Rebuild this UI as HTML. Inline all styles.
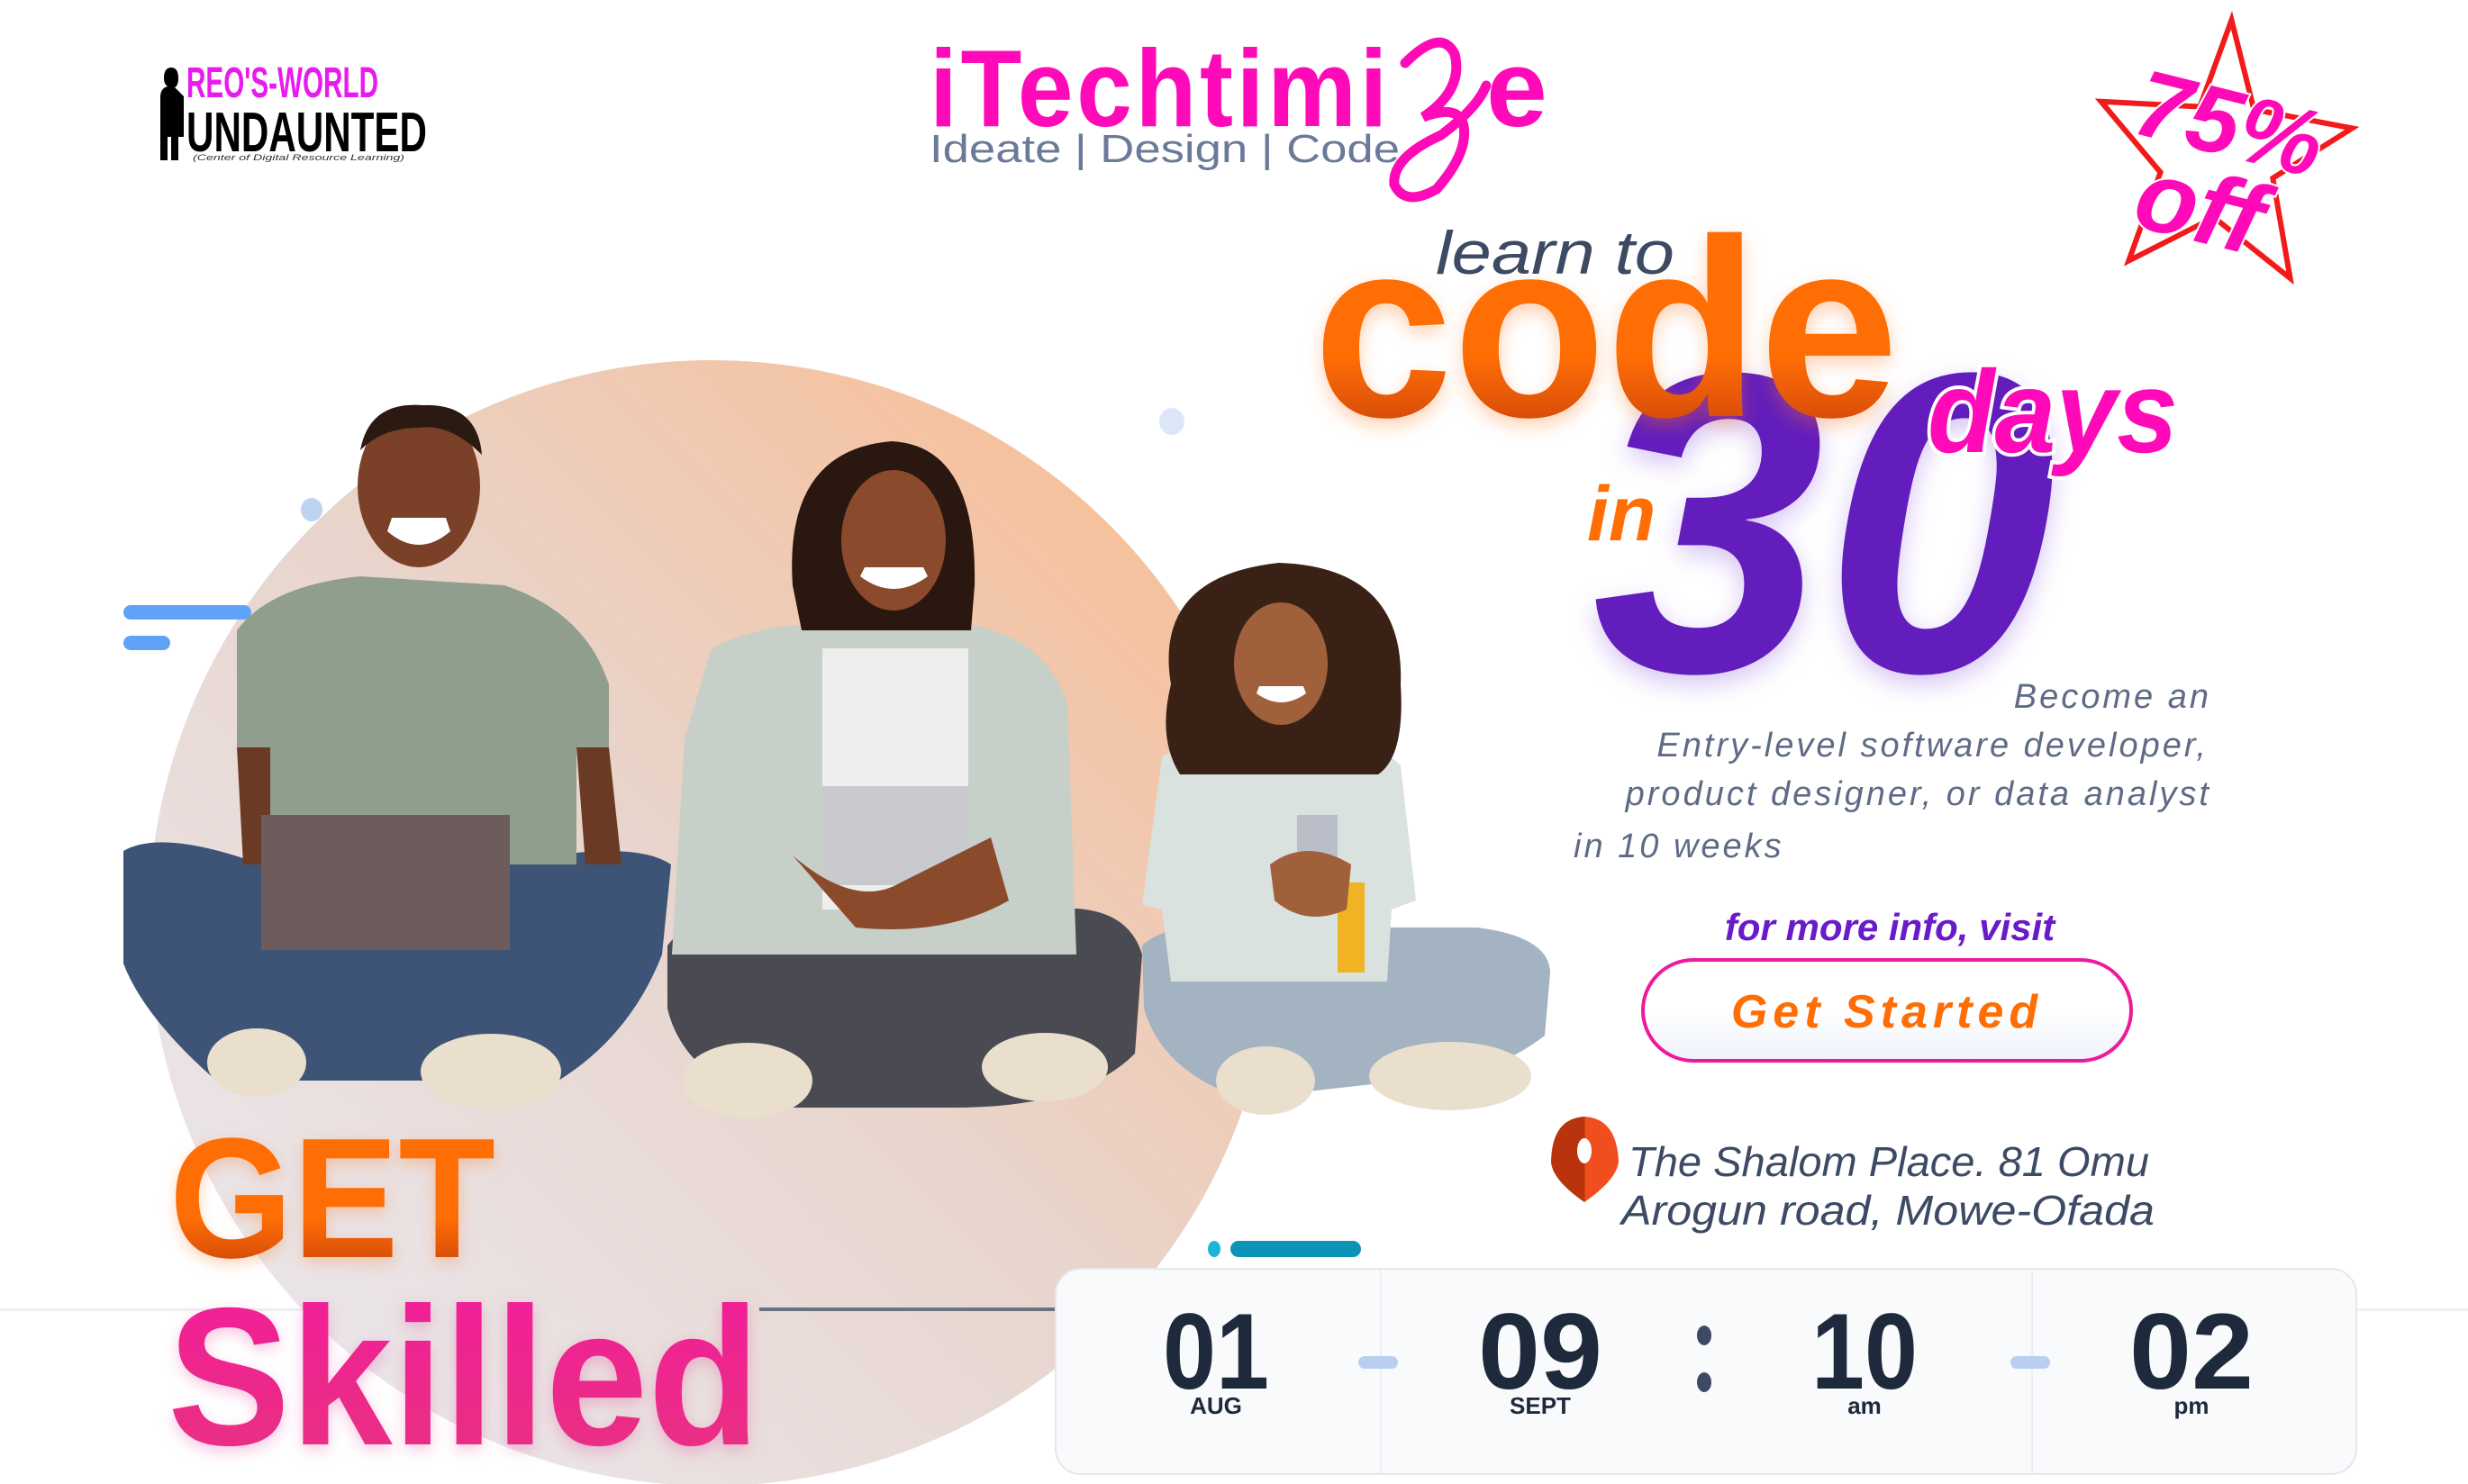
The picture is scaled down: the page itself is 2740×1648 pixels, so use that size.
<!DOCTYPE html>
<html><head><meta charset="utf-8"><style>
html,body{margin:0;padding:0;background:#fff;}
svg{display:block;}
text{font-family:"Liberation Sans",sans-serif;}
</style></head><body>
<svg width="2740" height="1648" viewBox="0 0 2740 1648" xmlns="http://www.w3.org/2000/svg">
<defs>
<linearGradient id="circ" x1="0" y1="1" x2="1" y2="0">
<stop offset="0" stop-color="#ebebf3"/><stop offset="0.5" stop-color="#e8d5cd"/><stop offset="1" stop-color="#fbb98a"/>
</linearGradient>
<linearGradient id="org" x1="0" y1="0" x2="0" y2="1">
<stop offset="0" stop-color="#ff6d05"/><stop offset="0.6" stop-color="#ff6d05"/><stop offset="1" stop-color="#b8350c"/>
</linearGradient>
<linearGradient id="pink" x1="0" y1="0" x2="0" y2="1">
<stop offset="0" stop-color="#f21c9a"/><stop offset="1" stop-color="#e8337f"/>
</linearGradient>
<linearGradient id="btnbg" x1="0" y1="0" x2="0" y2="1">
<stop offset="0.5" stop-color="#fff"/><stop offset="1" stop-color="#eef2fb"/>
</linearGradient>
<linearGradient id="pin" x1="0" y1="0" x2="1" y2="0">
<stop offset="0.5" stop-color="#b9330c"/><stop offset="0.5" stop-color="#f04e1e"/>
</linearGradient>
</defs>

<rect x="0" y="1453" width="2740" height="3" fill="#eef0f3"/>

<circle cx="790" cy="1025" r="625" fill="url(#circ)"/>
<rect x="843" y="1452" width="330" height="4" fill="#6b7280"/>

<rect x="137" y="672" width="142" height="16" rx="8" fill="#5ea3f7"/>
<circle cx="297" cy="680" r="8" fill="#1ba9c9"/>
<rect x="137" y="706" width="52" height="16" rx="8" fill="#5ea3f7"/>
<ellipse cx="346" cy="566" rx="12" ry="13" fill="#bed3f2"/>
<ellipse cx="1301" cy="468" rx="14" ry="15" fill="#dbe7f9"/>
<rect x="1366" y="1378" width="145" height="18" rx="9" fill="#0b93b8"/>
<ellipse cx="1348" cy="1387" rx="7" ry="9" fill="#1bb5d6"/>

<!-- Person 1 -->
<path d="M137 945 Q180 920 290 960 L560 960 Q700 930 745 960 L735 1060 Q700 1150 620 1200 L240 1200 Q160 1130 137 1070 Z" fill="#3e5476"/>
<path d="M263 700 Q300 650 400 640 L560 650 Q650 680 676 760 L676 830 L640 830 L640 960 L300 960 L300 830 L263 830 Z" fill="#909e8e"/>
<path d="M263 830 L300 830 L300 960 L270 960 Z M640 830 L676 830 L690 960 L650 960 Z" fill="#6a3a24"/>
<rect x="290" y="905" width="276" height="150" fill="#6e5c5c"/>
<ellipse cx="465" cy="540" rx="68" ry="90" fill="#7a4128"/>
<path d="M400 500 Q410 445 470 450 Q530 448 535 505 Q500 470 465 475 Q425 475 400 500Z" fill="#2b1a12"/>
<path d="M430 590 Q465 620 500 590 L495 575 L435 575Z" fill="#fff"/>
<ellipse cx="285" cy="1180" rx="55" ry="38" fill="#e9dfcc"/>
<ellipse cx="545" cy="1190" rx="78" ry="42" fill="#e9dfcc"/>

<!-- Person 2 -->
<path d="M741 1050 Q780 1000 860 1010 L1160 1010 Q1250 1000 1268 1060 L1260 1170 Q1200 1230 1060 1230 L870 1230 Q760 1200 741 1120 Z" fill="#4a4a52"/>
<path d="M790 720 Q850 690 920 694 L1080 694 Q1160 710 1185 780 L1195 1060 L746 1060 L760 820 Z" fill="#c6d0c8"/>
<path d="M913 720 L1075 720 L1075 1010 L913 1010 Z" fill="#eeeeee"/>
<path d="M880 650 Q870 500 990 490 Q1085 495 1082 650 L1078 700 L890 700 Z" fill="#2a1710"/>
<ellipse cx="992" cy="600" rx="58" ry="78" fill="#8b4a2b"/>
<path d="M955 640 Q992 668 1030 640 L1025 630 L960 630Z" fill="#fff"/>
<rect x="913" y="873" width="162" height="110" fill="#c8cacd"/>
<path d="M880 950 Q950 1010 1000 980 L1100 930 L1120 1000 Q1050 1040 950 1030 Z" fill="#8b4a2b"/>
<ellipse cx="830" cy="1200" rx="72" ry="42" fill="#e9dfcc"/>
<ellipse cx="1160" cy="1185" rx="70" ry="38" fill="#e9dfcc"/>

<!-- Person 3 -->
<path d="M1268 1050 Q1300 1020 1400 1030 L1640 1030 Q1720 1040 1721 1080 L1715 1150 Q1650 1200 1560 1200 L1380 1220 Q1290 1190 1270 1120 Z" fill="#a3b3c1"/>
<path d="M1290 840 Q1340 815 1420 815 Q1520 815 1555 850 L1572 1000 L1545 1010 L1540 1090 L1300 1090 L1290 1010 L1268 1005 Z" fill="#d9e2de"/>
<rect x="1485" y="980" width="30" height="100" fill="#f0b323"/>
<path d="M1300 760 Q1280 640 1420 625 Q1560 630 1555 760 Q1560 840 1530 860 L1310 860 Q1285 820 1300 760Z" fill="#3a2116"/>
<ellipse cx="1422" cy="737" rx="52" ry="68" fill="#a0603b"/>
<path d="M1395 770 Q1422 790 1450 770 L1447 762 L1398 762Z" fill="#fff"/>
<rect x="1440" y="905" width="45" height="65" fill="#b9bec8"/>
<path d="M1410 960 Q1450 930 1500 960 L1495 1010 Q1450 1030 1415 1000Z" fill="#a0603b"/>
<ellipse cx="1405" cy="1200" rx="55" ry="38" fill="#e9dfcc"/>
<ellipse cx="1610" cy="1195" rx="90" ry="38" fill="#e9dfcc"/>

<!-- Logo -->
<path d="M190 75 q8 0 8 12 q0 8 -4 10 l10 10 l0 45 l-6 0 l0 26 l-8 0 l0 -26 l-4 0 l0 26 l-8 0 l0 -70 q0 -10 8 -12 q-4 -3 -4 -9 q0 -12 8 -12z" fill="#000"/>
<text x="207" y="108" font-size="48" font-weight="bold" fill="#e81aef" textLength="213" lengthAdjust="spacingAndGlyphs">REO'S-WORLD</text>
<text x="207" y="168" font-size="62" font-weight="bold" fill="#000" textLength="267" lengthAdjust="spacingAndGlyphs" font-family="Liberation Serif">UNDAUNTED</text>
<text x="214" y="178" font-size="9" fill="#333" textLength="235" lengthAdjust="spacingAndGlyphs" font-style="italic">(Center of Digital Resource Learning)</text>

<!-- iTechtimiZe -->
<text x="1032" y="140" font-size="122" font-weight="bold" fill="#ff0ab8" textLength="512" lengthAdjust="spacingAndGlyphs" style="letter-spacing:4px">iTechtimi</text>
<path d="M1560 70 Q1600 30 1615 60 Q1625 100 1580 130 Q1620 115 1625 140 Q1630 170 1595 210 Q1560 230 1548 205 Q1545 175 1600 150 Q1640 120 1650 95" fill="none" stroke="#ff0ab8" stroke-width="11" stroke-linecap="round"/>
<text x="1650" y="140" font-size="122" font-weight="bold" fill="#ff0ab8">e</text>
<text x="1032" y="180" font-size="44" fill="#6b7a99" textLength="522" lengthAdjust="spacingAndGlyphs">Ideate  |  Design  |  Code</text>

<!-- star -->
<g transform="rotate(3 2470 165)">
<polygon points="2470,22 2500,120 2610,135 2525,195 2550,305 2462,242 2370,295 2400,195 2330,120 2440,120" fill="#fff" stroke="#f21a1a" stroke-width="6"/>
</g>
<g transform="rotate(14 2465 180)">
<text x="2465" y="172" font-size="105" font-weight="bold" font-style="italic" fill="#ff0ab8" text-anchor="middle" stroke="#fff" stroke-width="4" paint-order="stroke">75%</text>
<text x="2455" y="272" font-size="112" font-weight="bold" font-style="italic" fill="#ff0ab8" text-anchor="middle" stroke="#fff" stroke-width="4" paint-order="stroke">off</text>
</g>

<!-- headline -->
<text x="1594" y="304" font-size="68" font-style="italic" fill="#3d4a63" textLength="265" lengthAdjust="spacingAndGlyphs">learn to</text>
<text x="1768" y="745" font-size="475" font-weight="bold" font-style="italic" fill="#631dbc" textLength="515" lengthAdjust="spacingAndGlyphs" style="filter:drop-shadow(0 10px 14px rgba(120,60,220,0.3))">30</text>
<text x="1458" y="462" font-size="282" font-weight="bold" fill="url(#org)" textLength="650" lengthAdjust="spacingAndGlyphs" style="filter:drop-shadow(0 8px 10px rgba(255,120,30,0.35))">code</text>
<text x="1762" y="600" font-size="86" font-weight="bold" font-style="italic" fill="#ff6d05">in</text>
<text x="2140" y="502" font-size="130" font-weight="bold" font-style="italic" fill="#ff0ab8" stroke="#fff" stroke-width="8" paint-order="stroke" textLength="278" lengthAdjust="spacingAndGlyphs">days</text>

<g font-size="38" font-style="italic" fill="#5f6b85" style="letter-spacing:3px">
<text x="2455" y="786" text-anchor="end">Become an</text>
<text x="2452" y="840" text-anchor="end">Entry-level software developer,</text>
<text x="2455" y="894" text-anchor="end">product designer, or data analyst</text>
<text x="1747" y="952">in 10 weeks</text>
</g>
<text x="2098" y="1044" font-size="42" font-weight="bold" font-style="italic" fill="#6a1bc9" text-anchor="middle">for more info, visit</text>

<rect x="1824" y="1066" width="542" height="112" rx="56" fill="url(#btnbg)" stroke="#ee1a9e" stroke-width="4"/>
<text x="2095" y="1141" font-size="52" font-weight="bold" font-style="italic" fill="#ff6d05" text-anchor="middle" style="letter-spacing:6px">Get Started</text>

<path d="M1759 1240 Q1795 1242 1797 1290 Q1795 1310 1759 1335 Q1723 1310 1722 1290 Q1723 1242 1759 1240Z" fill="url(#pin)"/>
<ellipse cx="1759" cy="1278" rx="8" ry="14" fill="#fff"/>
<g font-size="46" font-style="italic" fill="#3d4a63">
<text x="1808" y="1306" textLength="578" lengthAdjust="spacingAndGlyphs">The Shalom Place. 81 Omu</text>
<text x="1800" y="1360" textLength="592" lengthAdjust="spacingAndGlyphs">Arogun road, Mowe-Ofada</text>
</g>

<text x="188" y="1396" font-size="190" font-weight="bold" fill="url(#org)" textLength="362" lengthAdjust="spacingAndGlyphs" style="filter:drop-shadow(0 6px 8px rgba(255,120,30,0.3))">GET</text>
<text x="186" y="1604" font-size="218" font-weight="bold" fill="url(#pink)" textLength="658" lengthAdjust="spacingAndGlyphs" style="filter:drop-shadow(0 6px 8px rgba(230,30,140,0.25))">Skilled</text>

<rect x="1172" y="1409" width="1444" height="228" rx="28" fill="#f8fafc" stroke="#e5e7eb" stroke-width="2"/>
<rect x="1532" y="1410" width="2" height="226" fill="#eceef1"/>
<rect x="2255" y="1410" width="2" height="226" fill="#eceef1"/>
<g font-weight="bold" fill="#1e293b" text-anchor="middle">
<text x="1350" y="1542" font-size="120" textLength="118" lengthAdjust="spacingAndGlyphs">01</text>
<text x="1710" y="1542" font-size="120" textLength="138" lengthAdjust="spacingAndGlyphs">09</text>
<text x="2070" y="1542" font-size="120" textLength="118" lengthAdjust="spacingAndGlyphs">10</text>
<text x="2433" y="1542" font-size="120" textLength="138" lengthAdjust="spacingAndGlyphs">02</text>
<text x="1350" y="1570" font-size="26">AUG</text>
<text x="1710" y="1570" font-size="26">SEPT</text>
<text x="2070" y="1570" font-size="26">am</text>
<text x="2433" y="1570" font-size="26">pm</text>
</g>
<rect x="1508" y="1506" width="44" height="14" rx="7" fill="#b9cff0"/>
<rect x="2232" y="1506" width="44" height="14" rx="7" fill="#b9cff0"/>
<ellipse cx="1892" cy="1483" rx="8" ry="11" fill="#3d4a63"/>
<ellipse cx="1892" cy="1535" rx="8" ry="11" fill="#3d4a63"/>
</svg>
</body></html>
